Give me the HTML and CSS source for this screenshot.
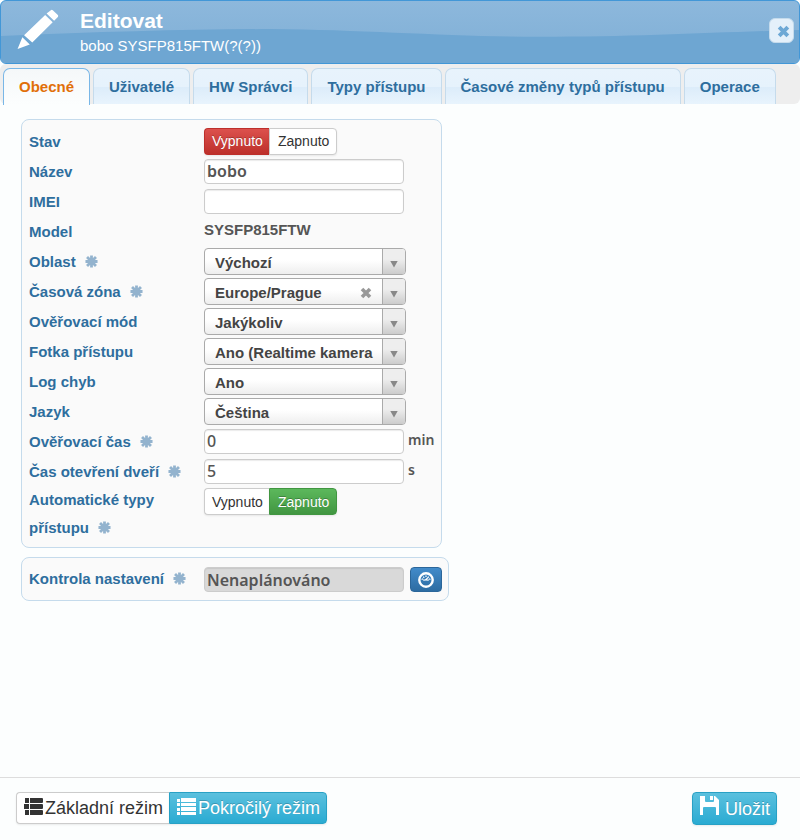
FILE: index.html
```html
<!DOCTYPE html>
<html lang="cs">
<head>
<meta charset="utf-8">
<meta name="viewport" content="width=device-width, initial-scale=1">
<title>Editovat</title>
<link rel="stylesheet" href="styles.css">
</head>
<body>
<svg class="defs" aria-hidden="true">
  <symbol id="req" viewBox="0 0 14 14">
    <g stroke="currentColor" stroke-width="3"><path d="M7 0.5V13.5M0.5 7H13.5M2.2 2.2L11.8 11.8M11.8 2.2L2.2 11.8"/></g>
  </symbol>
  <symbol id="cross" viewBox="0 0 12 12">
    <path d="M2 2L10 10M10 2L2 10" stroke="currentColor" stroke-width="3.6"/>
  </symbol>
</svg>

<header class="titlebar">
  <svg class="wave" viewBox="0 0 800 64" preserveAspectRatio="none" aria-hidden="true">
    <path d="M0 36C100 32 190 29 270 29C370 30 450 37 540 37C640 37 720 32 800 30V64H0Z"/>
  </svg>
  <svg class="pencil" viewBox="0 0 44 44" aria-hidden="true">
    <path fill="#fff" d="M35.5 1.2Q36.5 0.2 37.5 1.2L42.8 6.4Q43.6 7.4 42.8 8.4L38.9 12.4L31 4.7ZM29.5 6.2L37.4 13.9L16 35.2L7.4 27.5ZM5.6 29.6L13.4 37.2L0.6 42Z"/>
  </svg>
  <div class="titles">
    <h1>Editovat</h1>
    <p>bobo SYSFP815FTW(?(?))</p>
  </div>
  <button type="button" class="close" aria-label="Zavřít"><svg aria-hidden="true"><use href="#cross"/></svg></button>
</header>

<nav class="tabs">
  <a href="#obecne" class="tab active">Obecné</a>
  <a href="#uzivatele" class="tab">Uživatelé</a>
  <a href="#spravci" class="tab">HW Správci</a>
  <a href="#typy" class="tab">Typy přístupu</a>
  <a href="#zmeny" class="tab">Časové změny typů přístupu</a>
  <a href="#operace" class="tab">Operace</a>
</nav>

<main id="obecne" class="content">
  <section class="panel">
    <div class="row"><span class="label">Stav</span>
      <div class="switch" role="group" aria-label="Stav"><button type="button" class="off selected">Vypnuto</button><button type="button" class="on">Zapnuto</button></div></div>
    <div class="row"><label class="label" for="nazev">Název</label><input id="nazev" class="field" type="text" value="bobo"></div>
    <div class="row"><label class="label" for="imei">IMEI</label><input id="imei" class="field" type="text"></div>
    <div class="row"><span class="label">Model</span><span class="value">SYSFP815FTW</span></div>
    <div class="row"><label class="label" for="oblast">Oblast<svg class="req"><use href="#req"/></svg></label>
      <span class="combo"><select id="oblast"><option>Výchozí</option></select></span></div>
    <div class="row"><label class="label" for="zona">Časová zóna<svg class="req"><use href="#req"/></svg></label>
      <span class="combo"><select id="zona"><option>Europe/Prague</option></select><button type="button" class="clear" aria-label="Vymazat"><svg aria-hidden="true"><use href="#cross"/></svg></button></span></div>
    <div class="row"><label class="label" for="mod">Ověřovací mód</label>
      <span class="combo"><select id="mod"><option>Jakýkoliv</option></select></span></div>
    <div class="row"><label class="label" for="fotka">Fotka přístupu</label>
      <span class="combo"><select id="fotka"><option>Ano (Realtime kamera</option></select></span></div>
    <div class="row"><label class="label" for="log">Log chyb</label>
      <span class="combo"><select id="log"><option>Ano</option></select></span></div>
    <div class="row"><label class="label" for="jazyk">Jazyk</label>
      <span class="combo"><select id="jazyk"><option>Čeština</option></select></span></div>
    <div class="row"><label class="label" for="cas">Ověřovací čas<svg class="req"><use href="#req"/></svg></label>
      <input id="cas" class="field number" type="text" value="0"><span class="unit">min</span></div>
    <div class="row"><label class="label" for="dvere">Čas otevření dveří<svg class="req"><use href="#req"/></svg></label>
      <input id="dvere" class="field number" type="text" value="5"><span class="unit">s</span></div>
    <div class="row tall"><span class="label">Automatické typy přístupu<svg class="req"><use href="#req"/></svg></span>
      <div class="switch" role="group" aria-label="Automatické typy přístupu"><button type="button" class="off">Vypnuto</button><button type="button" class="on selected">Zapnuto</button></div></div>
  </section>

  <section class="panel check">
    <div class="row"><label class="label" for="kontrola">Kontrola nastavení<svg class="req"><use href="#req"/></svg></label>
      <input id="kontrola" class="field" type="text" value="Nenaplánováno" readonly>
      <button type="button" class="gauge" aria-label="Zkontrolovat"><svg viewBox="0 0 16 16" aria-hidden="true">
        <circle cx="8" cy="8" r="6.7" fill="none" stroke="#fff" stroke-width="2.4"/>
        <path d="M3.6 7.6L5 6.8M5.3 4.6L6.2 5.8M8 3.6V5M10.7 4.6L9.8 5.8M12.4 7.6L11 6.8M7.4 8L10 5.6M5.2 8.2Q8 7.4 10.8 8.2" fill="none" stroke="#fff" stroke-width="1.2"/>
      </svg></button></div>
  </section>
</main>

<footer class="actions">
  <div class="modes" role="group" aria-label="Režim">
    <button type="button" class="big">
      <svg class="list" viewBox="0 0 19 18" aria-hidden="true"><path fill="currentColor" d="M1 0H5V5H1ZM6 0H18Q19 0 19 1V4Q19 5 18 5H6ZM0 6H5V11H0ZM6 6H18Q19 6 19 7V10Q19 11 18 11H6ZM1 12H5V17H1ZM6 12H18Q19 12 19 13V16Q19 17 18 17H6Z"/></svg>Základní režim</button><button type="button" class="big info">
      <svg class="list" viewBox="0 0 19 18" aria-hidden="true"><path fill="currentColor" d="M0 1H3V4H0ZM4 0H19V4H4ZM0 5H3V8H0ZM4 5H19V8H4ZM0 10H3V13H0ZM4 9H19V13H4ZM0 14H3V17H0ZM4 14H19V17H4Z"/></svg>Pokročilý režim</button>
  </div>
  <button type="button" class="big info save">
    <svg class="disk" viewBox="0 0 19 19" aria-hidden="true"><path fill="currentColor" fill-rule="evenodd" d="M0 0H5V5Q5 6 6 6H13Q14 6 14 5V0H15L19 4V19H16V12Q16 11 15 11H4Q3 11 3 12V19H0ZM10 0H13V4H10Z"/></svg>Uložit</button>
</footer>
</body>
</html>
```
FILE: styles.css
```css
* { box-sizing: border-box; }

body {
  margin: 0;
  min-height: 100vh;
  display: flex;
  flex-direction: column;
  background: #fcfefe;
  font: bold 15px/20px "Liberation Sans", Arial, sans-serif;
  color: #555;
}

button, input, select { font: inherit; margin: 0; }
button { cursor: pointer; }
.defs { display: none; }

.titlebar {
  position: relative;
  display: flex;
  align-items: center;
  height: 64px;
  padding: 0 5px 0 16px;
  border: 1px solid #4297d7;
  border-radius: 6px;
  background: linear-gradient(#8db8dc, #84b2d8 60%);
  color: #fff;
  overflow: hidden;
}
.wave {
  position: absolute;
  inset: 0;
  width: 100%;
  height: 100%;
  fill: #6ea6d2;
}
.pencil { position: relative; width: 42px; height: 44px; margin-bottom: 4px; }
.titles { position: relative; flex: 1; padding: 2px 0 0 21px; }
.titles h1 { margin: 0; font-size: 21px; line-height: 26px; }
.titles p { margin: 0; font-weight: normal; font-size: 15px; line-height: 24px; }
.close {
  position: relative;
  width: 25px;
  height: 25px;
  margin-top: -4px;
  padding: 0;
  border: 1px solid #c5dbec;
  border-radius: 6px;
  background: #e4f0fa;
  color: #6da8d5;
  display: grid;
  place-items: center;
}
.close svg { width: 13px; height: 13px; margin: 3px 0 0 3px; }

.tabs {
  display: flex;
  gap: 3px;
  padding: 4px 3px 0;
  background: #eee;
  border-radius: 6px;
}
.tab {
  height: 36px;
  padding: 8px 15px;
  border: 1px solid #c5dbec;
  border-bottom: 0;
  border-radius: 7px 7px 0 0;
  background: linear-gradient(#e8f3fc 0, #e6f2fc 50%, #dcecfa 52%, #e8f4fd 100%);
  color: #2e6e9e;
  text-decoration: none;
  white-space: nowrap;
}
.tab.active {
  height: 37px;
  margin-bottom: -1px;
  border-color: #79b7e7;
  background: linear-gradient(#f5f8f9, #fcfefe);
  color: #e17009;
}

.content {
  flex: 1;
  display: flex;
  flex-direction: column;
  align-items: flex-start;
  gap: 9px;
  padding: 15px 21px;
}
.panel {
  padding: 7px;
  border: 1px solid #c5dbec;
  border-radius: 8px;
  background: #fafafa;
  width: 421px;
}
.row { display: flex; align-items: center; height: 30px; }
.label { flex: none; width: 175px; color: #2e6e9e; }
.req { width: 13px; height: 13px; margin-left: 9px; color: #93b3ce; vertical-align: -1px; }
.row.tall { height: 53px; align-items: flex-start; }
.tall .label { line-height: 28px; margin-top: -1px; padding-right: 40px; }
.tall .switch { margin-top: 1px; }
.check { width: 428px; }
.check .row { height: 28px; }

.field {
  flex: none;
  width: 200px;
  height: 25px;
  margin-bottom: 2px;
  padding: 0 2px;
  border: 1px solid #ccc;
  border-radius: 4px;
  background: #fff;
  box-shadow: inset 0 1px 1px rgba(0, 0, 0, .08);
  font: 600 16px/20px "Noto Sans", "Open Sans", sans-serif;
  color: #555;
}
.field.number { font-weight: 500; }
.check .field { margin-bottom: 0; background: #d9d9d9; }
.check .field, .check .gauge { margin-top: 1px; }
.value { padding-bottom: 4px; }
.unit { margin-left: 4px; padding-bottom: 4px; font: 600 14px/20px "Noto Sans", "Open Sans", sans-serif; }

.switch, .modes { display: flex; }
.switch { margin-bottom: 2px; }
.switch button {
  height: 27px;
  padding: 0 7px 0 8px;
  border: 1px solid #ccc;
  background: #fff;
  color: #333;
  font-weight: normal;
  font-size: 14px;
  box-shadow: 0 1px 2px rgba(0, 0, 0, .08);
}
.switch .off { width: 65px; padding: 0 7px; border-right: 0; border-radius: 4px 0 0 4px; }
.switch .on { border-radius: 0 4px 4px 0; }
.switch .selected { color: #fff; text-shadow: 0 -1px 0 rgba(0, 0, 0, .25); }
.switch .off.selected { border-color: #bd2f2b; background: linear-gradient(#dc514d, #bd302b); }
.switch .on.selected { border-color: #419641; background: linear-gradient(#5cb85c, #419641); }

.combo { position: relative; width: 202px; height: 27px; margin-bottom: 2px; }
.combo select {
  appearance: none;
  width: 100%;
  height: 100%;
  padding: 3px 24px 0 10px;
  border: 1px solid #aaa;
  border-radius: 4px;
  background: linear-gradient(#fff 45%, #eee);
  color: #444;
}
.combo::before {
  content: "";
  position: absolute;
  inset: 1px 1px 1px auto;
  width: 22px;
  border-left: 1px solid #aaa;
  border-radius: 0 3px 3px 0;
  background: linear-gradient(#eee 40%, #ccc);
  pointer-events: none;
}
.combo::after {
  content: "";
  position: absolute;
  top: 13px;
  right: 8px;
  width: 8px;
  height: 7px;
  background: #888;
  clip-path: polygon(0 0, 100% 0, 50% 100%);
  pointer-events: none;
}
.clear {
  position: absolute;
  top: 9px;
  right: 34px;
  width: 12px;
  height: 12px;
  padding: 0;
  border: 0;
  background: none;
  color: #999;
}
.clear svg { display: block; width: 12px; height: 12px; }

.gauge {
  flex: none;
  width: 32px;
  height: 25px;
  margin-left: 6px;
  padding: 0;
  border: 1px solid #2b669a;
  border-radius: 4px;
  background: linear-gradient(#428bca, #2d6ca2);
  display: grid;
  place-items: center;
}
.gauge svg { width: 16px; height: 16px; }

.actions {
  display: flex;
  justify-content: space-between;
  align-items: flex-start;
  height: 63px;
  padding: 14px 23px 0 16px;
  border-top: 1px solid #ddd;
}
.big {
  display: flex;
  align-items: center;
  gap: 2px;
  height: 32px;
  padding: 0 6px 0 7px;
  border: 1px solid #ccc;
  border-radius: 4px 0 0 4px;
  background: #fff;
  color: #333;
  font-weight: normal;
  font-size: 18px;
  box-shadow: 0 1px 2px rgba(0, 0, 0, .08);
}
.modes .big:first-child { border-right: 0; }
.info {
  border-color: #28a1c5;
  border-radius: 0 4px 4px 0;
  background: linear-gradient(#5bc0de, #2aabd2);
  color: #fff;
  text-shadow: 0 -1px 0 rgba(0, 0, 0, .2);
}
.save { height: 33px; gap: 6px; border-radius: 4px; }
.list { width: 19px; height: 18px; margin-bottom: 3px; }
.disk { width: 19px; height: 19px; margin-bottom: 7px; }
```
